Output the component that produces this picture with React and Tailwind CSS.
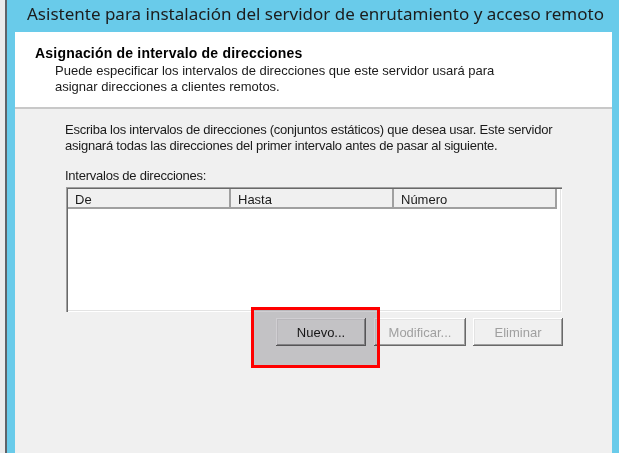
import React from 'react';

const winFont = { fontFamily: '"Liberation Sans", Arial, sans-serif' };

const Button = ({ label, disabled, className = '' }) => (
  <button
    className={`h-[28px] bg-[#f0f0f0] text-[13px] leading-none shadow-[inset_-1px_-1px_#696969,inset_1px_1px_#fff,inset_-2px_-2px_#a0a0a0,inset_2px_2px_#e3e3e3] ${
      disabled ? 'text-[#a0a0a0]' : 'text-[#1a1a1a]'
    } ${className}`}
  >
    {label}
  </button>
);

const HeaderCell = ({ label, width }) => (
  <div
    className="h-[20px] shrink-0 border-r-2 border-b-2 border-[#a0a0a0] pl-[7px] pt-[3px] text-[13px] leading-[16px] text-[#1a1a1a]"
    style={{ width }}
  >
    {label}
  </div>
);

export default function App() {
  return (
    <div className="flex h-[453px] w-[619px] overflow-hidden bg-[#f0f0f0]" style={winFont}>
      <div className="w-[5px] bg-[#ebebeb]" />
      <div className="w-[2px] bg-[#5f6368]" />
      <div className="flex flex-1 flex-col bg-[#69cbea] pl-[8px] pr-[7px]">
        <div
          className="h-[32px] shrink-0 pl-[12px] pt-[2px] text-[17px] leading-[24px] text-[#1c1c1c]"
          style={{ fontFamily: '"Noto Sans", "Open Sans", sans-serif' }}
        >
          Asistente para instalación del servidor de enrutamiento y acceso remoto
        </div>
        <div className="flex flex-1 flex-col bg-[#f0f0f0]">
          <div className="h-[77px] shrink-0 border-b-2 border-[#c8c8c8] bg-white pl-[20px] pt-[13px]">
            <div className="text-[14px] font-bold leading-[16px] tracking-[0.2px] text-black">
              Asignación de intervalo de direcciones
            </div>
            <p className="mt-[2px] pl-[20px] text-[13px] leading-[16px] text-[#1a1a1a]">
              Puede especificar los intervalos de direcciones que este servidor usará para
              <br />
              asignar direcciones a clientes remotos.
            </p>
          </div>

          <div className="pl-[50px] pt-[13px]">
            <p className="text-[13px] leading-[16px] tracking-[-0.24px] text-[#1a1a1a]">
              Escriba los intervalos de direcciones (conjuntos estáticos) que desea usar. Este servidor
              <br />
              asignará todas las direcciones del primer intervalo antes de pasar al siguiente.
            </p>
            <p className="mt-[14px] text-[13px] leading-[16px] tracking-[-0.24px] text-[#1a1a1a]">
              Intervalos de direcciones:
            </p>

            <div className="ml-[1px] mt-[3px] h-[125px] w-[496px] bg-white pl-[2px] pt-[2px] shadow-[inset_1px_1px_#a0a0a0,inset_2px_2px_#696969,inset_-1px_-1px_#fff,inset_-2px_-2px_#e3e3e3]">
              <div className="flex w-[489px] bg-[#f0f0f0]">
                <HeaderCell label="De" width={163} />
                <HeaderCell label="Hasta" width={163} />
                <HeaderCell label="Número" width={163} />
              </div>
            </div>

            <div className="relative mt-[6px] flex w-[498px] justify-end">
              <Button label="Nuevo..." className="w-[90px]" />
              <Button label="Modificar..." disabled className="ml-[8px] w-[92px]" />
              <Button label="Eliminar" disabled className="ml-[7px] w-[90px]" />
              {/* highlight annotation over the Nuevo button */}
              <div className="pointer-events-none absolute left-[186px] top-[-11px] h-[61px] w-[129px] bg-[#d0ced2] mix-blend-multiply" />
              <div className="pointer-events-none absolute left-[186px] top-[-11px] h-[61px] w-[129px] border-[3px] border-[#ff0000]" />
            </div>
          </div>
        </div>
      </div>
    </div>
  );
}
